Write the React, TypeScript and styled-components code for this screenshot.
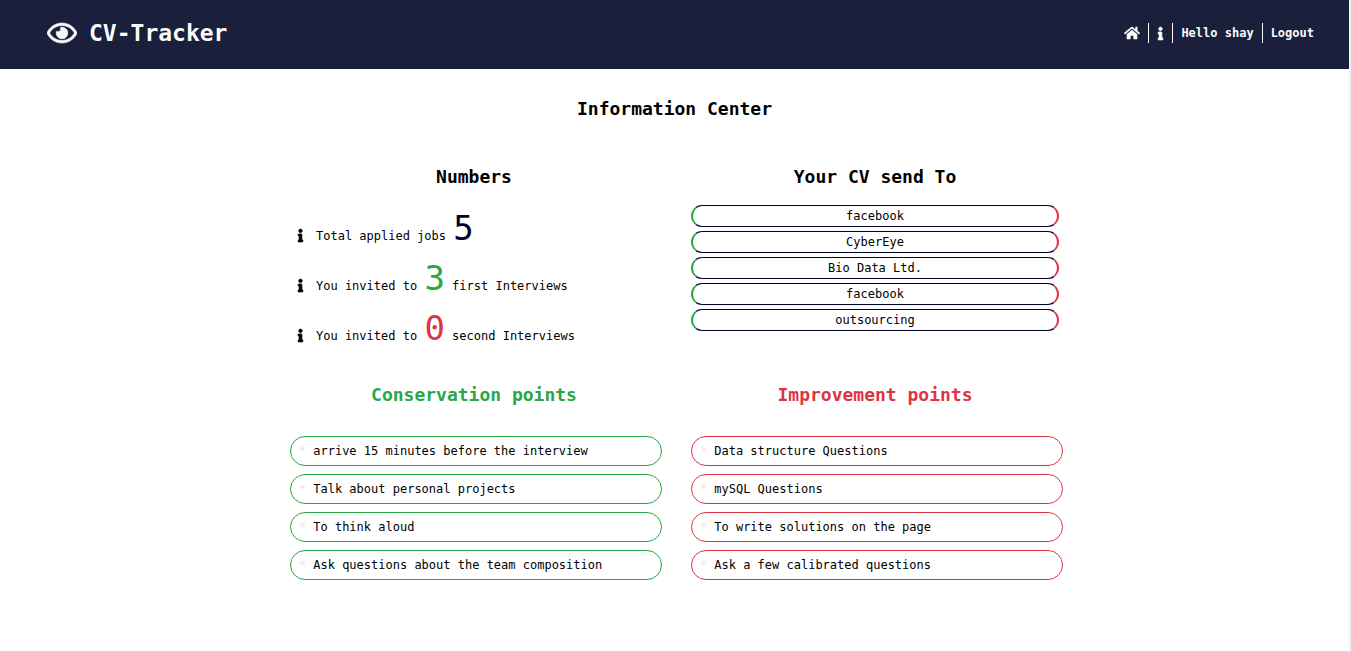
import React from "react";
import styled, { createGlobalStyle } from "styled-components";
import { FaHome, FaInfo, FaRegEye } from "react-icons/fa";

const NAVY = "#1a1f3b";
const INK = "#000428";
const GREEN = "#28a745";
const RED = "#dc3545";

const GlobalStyle = createGlobalStyle`
  *, *::before, *::after { box-sizing: border-box; }
  body {
    margin: 0;
    background: #fff;
    color: #000;
    font-family: "DejaVu Sans Mono", "Liberation Mono", monospace;
    font-size: 12px;
    line-height: 20px;
  }
  h1, h2, h3, p, ul { margin: 0; padding: 0; }
  ul { list-style: none; }
`;

const Page = styled.div`
  min-height: 100vh;
  border-right: 2px solid #f1f1f1;
`;

const Header = styled.header`
  display: flex;
  align-items: center;
  justify-content: space-between;
  padding: 18px 35px 21px 47px;
  background: ${NAVY};
  color: #fafafa;
`;

const Brand = styled.a`
  display: flex;
  align-items: center;
  gap: 12px;
  color: inherit;
  text-decoration: none;
`;

const EyeIcon = styled(FaRegEye)`
  width: 30px;
  height: 30px;
  stroke: currentColor;
  stroke-width: 12;
`;

const InfoIcon = styled(FaInfo)`
  flex: none;
  width: 7px;
  height: 13px;
  overflow: visible;
  stroke: currentColor;
  stroke-width: 24;
`;

const BrandName = styled.h1`
  font-size: 23px;
  line-height: 30px;
  font-weight: bold;
`;

const Nav = styled.nav`
  display: flex;
  align-items: center;
`;

const NavItem = styled.div`
  display: flex;
  align-items: center;
  height: 20px;
  padding: 0 8px;
  font-weight: bold;

  & + & {
    border-left: 1px solid #fafafa;
  }

  &:last-child {
    padding-right: 0;
  }
`;

const NavLink = styled.a`
  display: flex;
  color: inherit;
  text-decoration: none;
`;

const LogoutButton = styled.button`
  padding: 0;
  border: 0;
  background: none;
  color: inherit;
  font: inherit;
  cursor: pointer;
`;

const Main = styled.main`
  max-width: 769px;
  margin: 0 auto;
  padding: 29px 0 32px;
`;

const Title = styled.h2`
  margin-bottom: 46px;
  font-size: 18px;
  line-height: 22px;
  text-align: center;
`;

const Grid = styled.div`
  display: grid;
  grid-template-columns: 1fr 1fr;
  gap: 33px;
`;

const SectionTitle = styled.h3<{ $color?: string; $gap?: number }>`
  margin-bottom: ${({ $gap = 17 }) => $gap}px;
  color: ${({ $color = "inherit" }) => $color};
  font-size: 18px;
  line-height: 22px;
  text-align: center;
`;

const Stats = styled.ul`
  display: grid;
  gap: 4px;
`;

const Stat = styled.li`
  display: flex;
  align-items: baseline;
  gap: 12px;
  height: 46px;
  padding-left: 7px;
  line-height: 46px;

  svg {
    position: relative;
    top: 2px;
  }
`;

const Figure = styled.span<{ $color: string }>`
  color: ${({ $color }) => $color};
  font-size: 34px;
`;

const StatText = styled.p`
  white-space: pre;
`;

const Companies = styled.ul`
  display: grid;
  gap: 4px;
`;

const Company = styled.li`
  border: 1px solid ${INK};
  border-left: 2px solid ${GREEN};
  border-right: 2px solid ${RED};
  border-radius: 15px;
  text-align: center;
`;

const Points = styled.ul`
  display: grid;
  gap: 8px;
  margin-right: -4px;
`;

const Point = styled.li<{ $color: string }>`
  display: flex;
  gap: 7px;
  padding: 4px 8px;
  border: 1px solid ${({ $color }) => $color};
  border-radius: 15px;

  &::before {
    content: "*";
    color: #f0e4e8;
  }
`;

const stats = [
  { before: "Total applied jobs ", value: 5, after: "", color: INK },
  { before: "You invited to ", value: 3, after: " first Interviews", color: GREEN },
  { before: "You invited to ", value: 0, after: " second Interviews", color: RED },
];

const companies = ["facebook", "CyberEye", "Bio Data Ltd.", "facebook", "outsourcing"];

const pointLists = [
  {
    title: "Conservation points",
    color: GREEN,
    points: [
      "arrive 15 minutes before the interview",
      "Talk about personal projects",
      "To think aloud",
      "Ask questions about the team composition",
    ],
  },
  {
    title: "Improvement points",
    color: RED,
    points: [
      "Data structure Questions",
      "mySQL Questions",
      "To write solutions on the page",
      "Ask a few calibrated questions",
    ],
  },
];

export default function App() {
  return (
    <>
      <GlobalStyle />
      <Page>
        <Header>
          <Brand href="#home">
            <EyeIcon aria-hidden />
            <BrandName>CV-Tracker</BrandName>
          </Brand>
          <Nav>
            <NavItem>
              <NavLink href="#home" aria-label="Home">
                <FaHome size={16} />
              </NavLink>
            </NavItem>
            <NavItem>
              <NavLink href="#info" aria-label="Information">
                <InfoIcon />
              </NavLink>
            </NavItem>
            <NavItem>Hello shay</NavItem>
            <NavItem>
              <LogoutButton type="button">Logout</LogoutButton>
            </NavItem>
          </Nav>
        </Header>
        <Main>
          <Title>Information Center</Title>
          <Grid>
            <section>
              <SectionTitle>Numbers</SectionTitle>
              <Stats>
                {stats.map((s) => (
                  <Stat key={s.value}>
                    <InfoIcon aria-hidden />
                    <StatText>
                      {s.before}
                      <Figure $color={s.color}>{s.value}</Figure>
                      {s.after}
                    </StatText>
                  </Stat>
                ))}
              </Stats>
            </section>
            <section>
              <SectionTitle>Your CV send To</SectionTitle>
              <Companies>
                {companies.map((name, i) => (
                  <Company key={i}>{name}</Company>
                ))}
              </Companies>
            </section>
            {pointLists.map((list) => (
              <section key={list.title}>
                <SectionTitle $color={list.color} $gap={30}>
                  {list.title}
                </SectionTitle>
                <Points>
                  {list.points.map((text) => (
                    <Point key={text} $color={list.color}>
                      {text}
                    </Point>
                  ))}
                </Points>
              </section>
            ))}
          </Grid>
        </Main>
      </Page>
    </>
  );
}
